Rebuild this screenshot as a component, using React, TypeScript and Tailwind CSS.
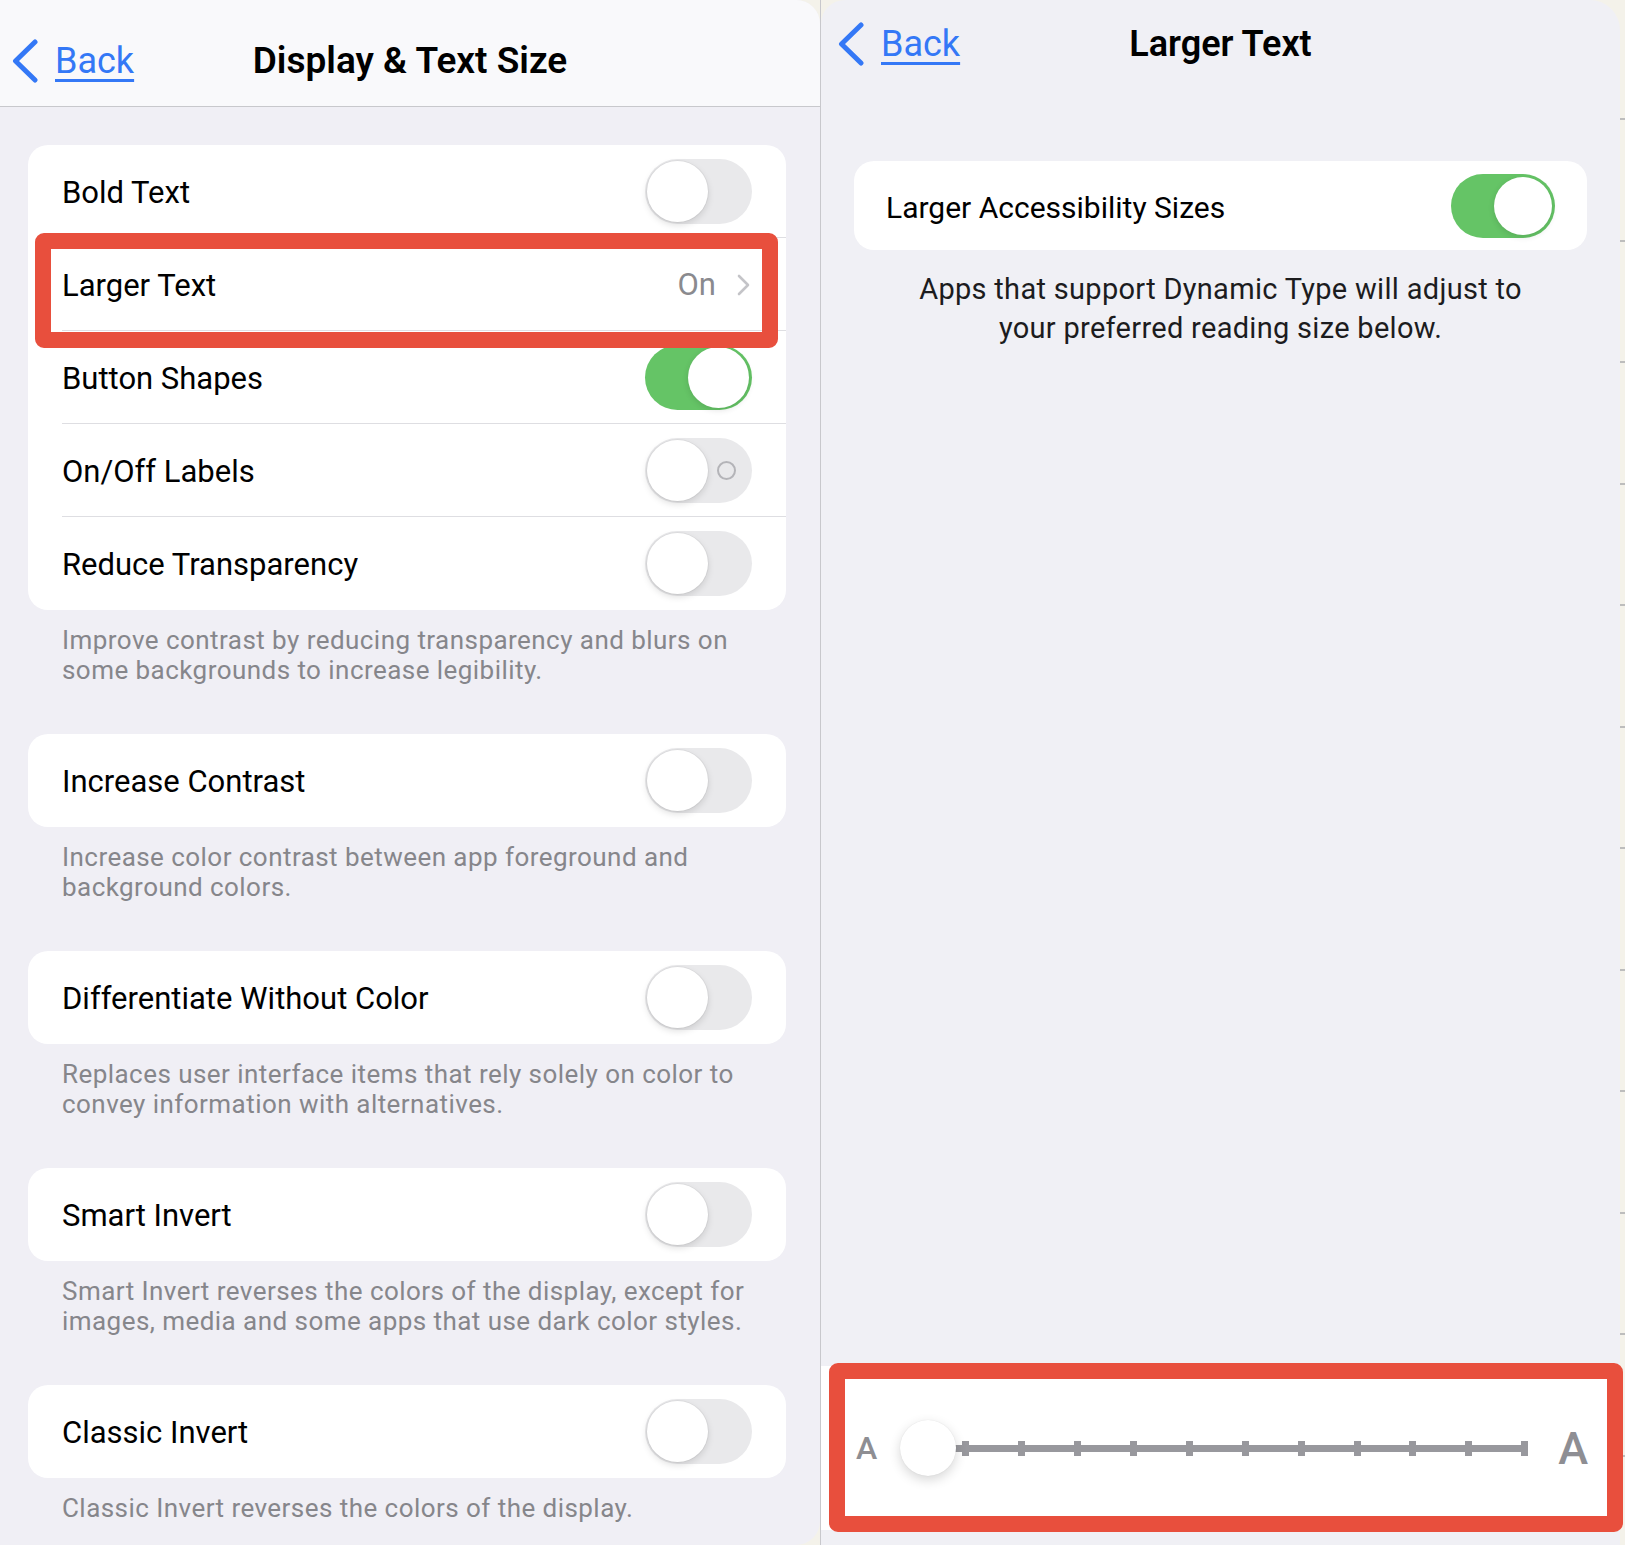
import React from 'react';

const BLUE = '#3478f6';

function Chevron({ className }: { className?: string }) {
  return (
    <svg width="28" height="44" viewBox="0 0 28 44" className={className} fill="none">
      <path d="M24 3 L4.5 22 L24 41" stroke={BLUE} strokeWidth="5" strokeLinecap="round" strokeLinejoin="round" />
    </svg>
  );
}

function Toggle({ on = false, labels = false, size = 'lg' }: { on?: boolean; labels?: boolean; size?: 'lg' | 'md' }) {
  const box = size === 'lg' ? 'w-[107px] h-[65px]' : 'w-[104px] h-[64px]';
  const knob = size === 'lg' ? 'w-[61px] h-[61px]' : 'w-[58px] h-[58px]';
  if (on) {
    return (
      <div className={`${box} rounded-full bg-[#65c466] flex items-center justify-end p-[3px] shrink-0`}>
        <div className={`${knob} rounded-full bg-white shadow-[0_2px_6px_rgba(0,0,0,0.12)]`} />
      </div>
    );
  }
  return (
    <div className={`${box} rounded-full bg-[#e9e9eb] flex items-center p-[2px] shrink-0`}>
      <div className={`${knob} rounded-full bg-white shadow-[0_3px_7px_rgba(0,0,0,0.13),0_0_0_1px_rgba(0,0,0,0.04)]`} />
      {labels && <div className="ml-[9px] w-[19px] h-[19px] rounded-full border-2 border-[#b4b4b8]" />}
    </div>
  );
}

type Row = { label: string; on?: boolean; labels?: boolean; value?: string };

function Card({ rows }: { rows: Row[] }) {
  return (
    <div className="bg-white rounded-[20px] overflow-hidden">
      {rows.map((r, i) => (
        <div key={r.label} className="pl-[34px]">
          <div
            className={`flex items-center justify-between h-[93px] ${r.value ? 'pr-[36px]' : 'pr-[34px]'} ${
              i < rows.length - 1 ? 'border-b border-[#dedee2]' : ''
            }`}
          >
            <span className="pt-[4px] text-[31px] text-black">{r.label}</span>
            {r.value ? (
              <div className="flex items-center gap-[21px] pt-[2px]">
                <span className="text-[31px] text-[#8a8a8e]">{r.value}</span>
                <svg width="13" height="22" viewBox="0 0 13 22" fill="none">
                  <path d="M2 2 L11 11 L2 20" stroke="#c4c4c8" strokeWidth="2.6" strokeLinecap="round" strokeLinejoin="round" />
                </svg>
              </div>
            ) : (
              <Toggle on={r.on} labels={r.labels} />
            )}
          </div>
        </div>
      ))}
    </div>
  );
}

function Footer({ lines }: { lines: string[] }) {
  return (
    <div className="pt-[15px] pb-[49px] pl-[34px] text-[26px] leading-[30px] tracking-[0.45px] text-[#86868b]">
      {lines.map((l) => (
        <div key={l}>{l}</div>
      ))}
    </div>
  );
}

const groups: { rows: Row[]; footer: string[] }[] = [
  {
    rows: [
      { label: 'Bold Text' },
      { label: 'Larger Text', value: 'On' },
      { label: 'Button Shapes', on: true },
      { label: 'On/Off Labels', labels: true },
      { label: 'Reduce Transparency' },
    ],
    footer: ['Improve contrast by reducing transparency and blurs on', 'some backgrounds to increase legibility.'],
  },
  {
    rows: [{ label: 'Increase Contrast' }],
    footer: ['Increase color contrast between app foreground and', 'background colors.'],
  },
  {
    rows: [{ label: 'Differentiate Without Color' }],
    footer: ['Replaces user interface items that rely solely on color to', 'convey information with alternatives.'],
  },
  {
    rows: [{ label: 'Smart Invert' }],
    footer: ['Smart Invert reverses the colors of the display, except for', 'images, media and some apps that use dark color styles.'],
  },
  {
    rows: [{ label: 'Classic Invert' }],
    footer: ['Classic Invert reverses the colors of the display.'],
  },
];

const ticks = Array.from({ length: 11 }, (_, i) => 34 + i * 55.9);
const edgeMarks = Array.from({ length: 12 }, (_, i) => i);

export default function App() {
  return (
    <div className="relative flex w-[1625px] h-[1545px] overflow-hidden bg-[#f4f2ea] font-['Roboto',_'Liberation_Sans',_sans-serif]">
      {/* left: Display & Text Size */}
      <div className="w-[820px] h-full bg-[#f0eff5] rounded-tr-[24px] rounded-br-[24px] overflow-hidden flex flex-col">
        <div className="h-[107px] shrink-0 bg-[#f9f9fb] border-b border-[#c8c8cc] grid grid-cols-[1fr_auto_1fr] items-center pt-[16px]">
          <div className="flex items-center pl-[11px]">
            <Chevron />
            <span className="ml-[16px] text-[36px] leading-none text-[#3478f6] underline decoration-[3px] underline-offset-[6px]">Back</span>
          </div>
          <div className="text-[37px] font-semibold text-black">Display &amp; Text Size</div>
          <div />
        </div>
        <div className="pt-[38px] pl-[28px] pr-[34px]">
          {groups.map((g, i) => (
            <div key={i}>
              <Card rows={g.rows} />
              <Footer lines={g.footer} />
            </div>
          ))}
        </div>
      </div>

      <div className="w-px h-full bg-[#c8c8cc]" />

      {/* right: Larger Text */}
      <div className="w-[799px] h-full bg-[#f0f0f5] rounded-tl-[24px] rounded-tr-[30px] overflow-hidden flex flex-col">
        <div className="h-[88px] shrink-0 grid grid-cols-[1fr_auto_1fr] items-center">
          <div className="flex items-center pl-[16px]">
            <Chevron />
            <span className="ml-[16px] text-[36px] leading-none text-[#3478f6] underline decoration-[3px] underline-offset-[6px]">Back</span>
          </div>
          <div className="text-[36px] font-semibold text-black">Larger Text</div>
          <div />
        </div>
        <div className="mt-[73px] mx-[33px] h-[89px] bg-white rounded-[20px] flex items-center justify-between pl-[32px] pr-[32px]">
          <span className="pt-[3px] text-[30px] text-black">Larger Accessibility Sizes</span>
          <Toggle on size="md" />
        </div>
        <div className="mt-[20px] text-center text-[29px] leading-[39px] tracking-[0.3px] text-[#1c1c1e]">
          Apps that support Dynamic Type will adjust to
          <br />
          your preferred reading size below.
        </div>

        <div className="mt-auto mb-[15px] h-[164px] bg-white flex items-center pl-[35px]">
          <span className="text-[32px] font-medium leading-none text-[#8e8e93]">A</span>
          <div className="relative ml-[51px] w-[600px] h-[7px] bg-[#98989d]">
            {ticks.map((t) => (
              <div key={t} className="absolute top-[-4px] w-[7px] h-[15px] bg-[#98989d]" style={{ left: t }} />
            ))}
            <div className="absolute left-[-28px] top-[-25px] w-[56px] h-[56px] rounded-full bg-white shadow-[0_4px_12px_rgba(0,0,0,0.16),0_0_1px_rgba(0,0,0,0.12)]" />
          </div>
          <span className="ml-[30px] text-[45px] font-medium leading-none text-[#8e8e93]">A</span>
        </div>
      </div>

      {/* page edge behind the panels */}
      <div className="w-[5px] h-full flex flex-col pt-[118px] gap-[119.5px]">
        {edgeMarks.map((m) => (
          <div key={m} className="h-[2px] w-full bg-[#bdbdbd]" />
        ))}
      </div>

      {/* red annotation boxes */}
      <div className="absolute left-[35px] top-[233px] w-[743px] h-[115px] border-[16px] border-[#e84f3d] rounded-[9px]" />
      <div className="absolute left-[829px] top-[1363px] w-[794px] h-[169px] border-[16px] border-[#e84f3d] rounded-[9px]" />
    </div>
  );
}
